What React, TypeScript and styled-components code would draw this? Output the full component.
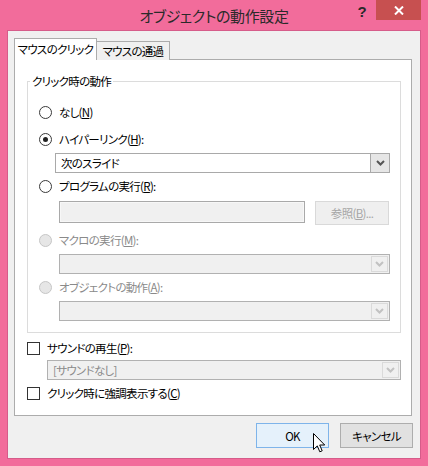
import React from 'react';
import styled, { createGlobalStyle } from 'styled-components';

const GlobalStyle = createGlobalStyle`
  html, body {
    margin: 0;
    padding: 0;
  }
  body {
    font-family: "Noto Sans CJK JP", "Noto Sans", sans-serif;
    font-feature-settings: "palt";
  }
`;

const Window = styled.div`
  width: 428px;
  height: 466px;
  background: #f26c9b;
  display: flex;
  flex-direction: column;
  box-sizing: border-box;
`;

const TitleBar = styled.div`
  height: 31px;
  display: grid;
  flex: 0 0 auto;
`;

const Title = styled.div`
  grid-area: 1 / 1;
  justify-self: center;
  align-self: center;
  font-size: 15px;
  letter-spacing: -0.4px;
  color: #2a2a2a;
  margin-top: -1px;
`;

const Controls = styled.div`
  grid-area: 1 / 1;
  justify-self: end;
  align-self: start;
  display: flex;
  margin-right: 7px;
`;

const HelpButton = styled.div`
  width: 28px;
  height: 20px;
  display: flex;
  align-items: center;
  justify-content: center;
  font-family: "Liberation Sans", sans-serif;
  font-weight: bold;
  font-size: 15px;
  color: #2a2a2a;
  padding-top: 3px;
  box-sizing: border-box;
`;

const CloseButton = styled.div`
  width: 45px;
  height: 20px;
  background: #c75050;
  display: flex;
  align-items: center;
  justify-content: center;
`;

const Body = styled.div`
  margin: 0 8px 8px;
  height: 427px;
  background: #f0f0f0;
  box-shadow: 0 0 0 1px #d65c8a;
  padding: 8px 8px 0 6px;
  box-sizing: border-box;
  display: flex;
  flex-direction: column;
  font-size: 11.5px;
  letter-spacing: -0.7px;
  color: #000;
`;

const Tabs = styled.div`
  display: flex;
  align-items: flex-end;
  height: 21px;
  margin-bottom: -1px;
  position: relative;
  z-index: 1;
`;

const Tab = styled.div<{ $active?: boolean; $w: number }>`
  width: ${p => p.$w}px;
  height: ${p => (p.$active ? 22 : 19)}px;
  box-sizing: border-box;
  border: 1px solid #acacac;
  border-bottom: none;
  ${p => (p.$active ? '' : 'border-left: none;')}
  background: ${p => (p.$active ? '#ffffff' : '#f0f0f0')};
  display: flex;
  align-items: center;
  justify-content: center;
  white-space: nowrap;
  line-height: 18px;
  padding-bottom: ${p => (p.$active ? 2 : 0)}px;
`;

const Panel = styled.div`
  height: 357px;
  background: #fff;
  border: 1px solid #acacac;
  box-sizing: border-box;
  padding: 21px 10px 0 12px;
  display: flex;
  flex-direction: column;
`;

const Group = styled.div`
  position: relative;
  border: 1px solid #dcdcdc;
  padding: 21px 10px 11px 11px;
  display: flex;
  flex-direction: column;
`;

const Legend = styled.span`
  position: absolute;
  top: -9px;
  left: 2px;
  padding: 0 2px;
  background: #fff;
  line-height: 16px;
`;

const OptionRow = styled.div<{ $gap?: number; $disabled?: boolean }>`
  height: 18px;
  margin-top: ${p => p.$gap ?? 0}px;
  display: flex;
  align-items: center;
  gap: 7px;
  line-height: 18px;
  color: ${p => (p.$disabled ? '#8a8a8a' : '#000')};
  white-space: nowrap;
`;

const Radio = styled.span<{ $checked?: boolean; $disabled?: boolean }>`
  width: 13px;
  height: 13px;
  box-sizing: border-box;
  border-radius: 50%;
  border: 1px solid ${p => (p.$disabled ? '#c6c6c6' : '#3a3a3a')};
  background: ${p => (p.$disabled ? '#e6e6e6' : '#fff')};
  display: flex;
  align-items: center;
  justify-content: center;
  flex: 0 0 auto;
  &::after {
    content: '';
    width: 5px;
    height: 5px;
    border-radius: 50%;
    background: ${p => (p.$checked ? '#222' : 'transparent')};
  }
`;

const Check = styled.span`
  width: 13px;
  height: 13px;
  box-sizing: border-box;
  border: 1px solid #333;
  background: #fff;
  flex: 0 0 auto;
`;

const Combo = styled.div<{ $gap: number; $indent: number; $w?: number; $disabled?: boolean }>`
  height: 20px;
  margin-top: ${p => p.$gap}px;
  margin-left: ${p => p.$indent}px;
  ${p => (p.$w ? `width: ${p.$w}px;` : '')}
  box-sizing: border-box;
  border: 1px solid ${p => (p.$disabled ? '#b1b1b1' : '#a9a9a9')};
  background: ${p => (p.$disabled ? '#f0f0f0' : '#fff')};
  display: flex;
  align-items: stretch;
  color: ${p => (p.$disabled ? '#8a8a8a' : '#000')};
`;

const ComboText = styled.div`
  flex: 1;
  padding-left: 5px;
  line-height: 18px;
  white-space: nowrap;
`;

const DropButton = styled.div<{ $disabled?: boolean }>`
  width: ${p => (p.$disabled ? 17 : 19)}px;
  box-sizing: border-box;
  display: flex;
  align-items: center;
  justify-content: center;
  ${p =>
    p.$disabled
      ? 'margin: 1px; border: 1px solid #dadada; background: #f0f0f0;'
      : 'border-left: 1px solid #a9a9a9; background: #e6e6e6;'}
`;

const InputRow = styled.div`
  margin-top: 6px;
  margin-left: 20px;
  display: flex;
  align-items: flex-start;
  gap: 10px;
  height: 24px;
`;

const TextInput = styled.div`
  width: 246px;
  height: 22px;
  box-sizing: border-box;
  border: 1px solid #a9a9a9;
  box-shadow: inset 0 0 0 1px #f7f7f7;
  background: #f0f0f0;
`;

const SideButton = styled.div`
  width: 74px;
  height: 24px;
  box-sizing: border-box;
  border: 1px solid #d9d9d9;
  background: #efefef;
  color: #a6a6a6;
  display: flex;
  align-items: center;
  justify-content: center;
  line-height: 18px;
`;

const ButtonRow = styled.div`
  display: flex;
  justify-content: flex-end;
  gap: 11px;
  margin-top: 7px;
  margin-right: -1px;
`;

const DialogButton = styled.div<{ $primary?: boolean }>`
  position: relative;
  width: 73px;
  height: 25px;
  box-sizing: border-box;
  border: 1px solid ${p => (p.$primary ? '#7eb4ea' : '#adadad')};
  background: ${p => (p.$primary ? '#e5f1fb' : '#e1e1e1')};
  display: flex;
  align-items: center;
  justify-content: center;
  line-height: 18px;
`;

const Cursor = styled.svg`
  position: absolute;
  left: 56px;
  top: 9px;
`;

const Chevron = ({ color }: { color: string }) => (
  <svg width="9" height="6" viewBox="0 0 9 6">
    <path d="M1 1 L4.5 4.5 L8 1" fill="none" stroke={color} strokeWidth="2" />
  </svg>
);

const App = () => {
  return (
    <>
      <GlobalStyle />
      <Window>
        <TitleBar>
          <Title>オブジェクトの動作設定</Title>
          <Controls>
            <HelpButton>?</HelpButton>
            <CloseButton>
              <svg width="10" height="9" viewBox="0 0 10 9">
                <path d="M1 0.5 L9 8.5 M9 0.5 L1 8.5" stroke="#fff" strokeWidth="2" />
              </svg>
            </CloseButton>
          </Controls>
        </TitleBar>
        <Body>
          <Tabs>
            <Tab $active $w={83}>マウスのクリック</Tab>
            <Tab $w={73}>マウスの通過</Tab>
          </Tabs>
          <Panel>
            <Group>
              <Legend>クリック時の動作</Legend>
              <OptionRow>
                <Radio />
                <span>なし(<u>N</u>)</span>
              </OptionRow>
              <OptionRow $gap={9}>
                <Radio $checked />
                <span>ハイパーリンク(<u>H</u>):</span>
              </OptionRow>
              <Combo $gap={5} $indent={16}>
                <ComboText>次のスライド</ComboText>
                <DropButton>
                  <Chevron color="#555" />
                </DropButton>
              </Combo>
              <OptionRow $gap={4}>
                <Radio />
                <span>プログラムの実行(<u>R</u>):</span>
              </OptionRow>
              <InputRow>
                <TextInput />
                <SideButton>参照(<u>B</u>)...</SideButton>
              </InputRow>
              <OptionRow $gap={6} $disabled>
                <Radio $disabled />
                <span>マクロの実行(<u>M</u>):</span>
              </OptionRow>
              <Combo $gap={5} $indent={20} $disabled>
                <ComboText />
                <DropButton $disabled>
                  <Chevron color="#c2c2c2" />
                </DropButton>
              </Combo>
              <OptionRow $gap={4} $disabled>
                <Radio $disabled />
                <span>オブジェクトの動作(<u>A</u>):</span>
              </OptionRow>
              <Combo $gap={5} $indent={20} $disabled>
                <ComboText />
                <DropButton $disabled>
                  <Chevron color="#c2c2c2" />
                </DropButton>
              </Combo>
            </Group>
            <OptionRow $gap={6}>
              <Check />
              <span>サウンドの再生(<u>P</u>):</span>
            </OptionRow>
            <Combo $gap={3} $indent={20} $w={354} $disabled>
              <ComboText>[サウンドなし]</ComboText>
              <DropButton $disabled>
                <Chevron color="#c2c2c2" />
              </DropButton>
            </Combo>
            <OptionRow $gap={4}>
              <Check />
              <span>クリック時に強調表示する(<u>C</u>)</span>
            </OptionRow>
          </Panel>
          <ButtonRow>
            <DialogButton $primary>
              OK
              <Cursor width="13" height="21" viewBox="0 0 13 21">
                <path
                  d="M0.5 0.5 L0.5 16.5 L4.3 12.9 L6.8 18.8 L9.2 17.8 L6.7 12 L11.7 12 Z"
                  fill="#fff"
                  stroke="#000"
                  strokeWidth="1"
                  strokeLinejoin="miter"
                />
              </Cursor>
            </DialogButton>
            <DialogButton>キャンセル</DialogButton>
          </ButtonRow>
        </Body>
      </Window>
    </>
  );
};

export default App;
